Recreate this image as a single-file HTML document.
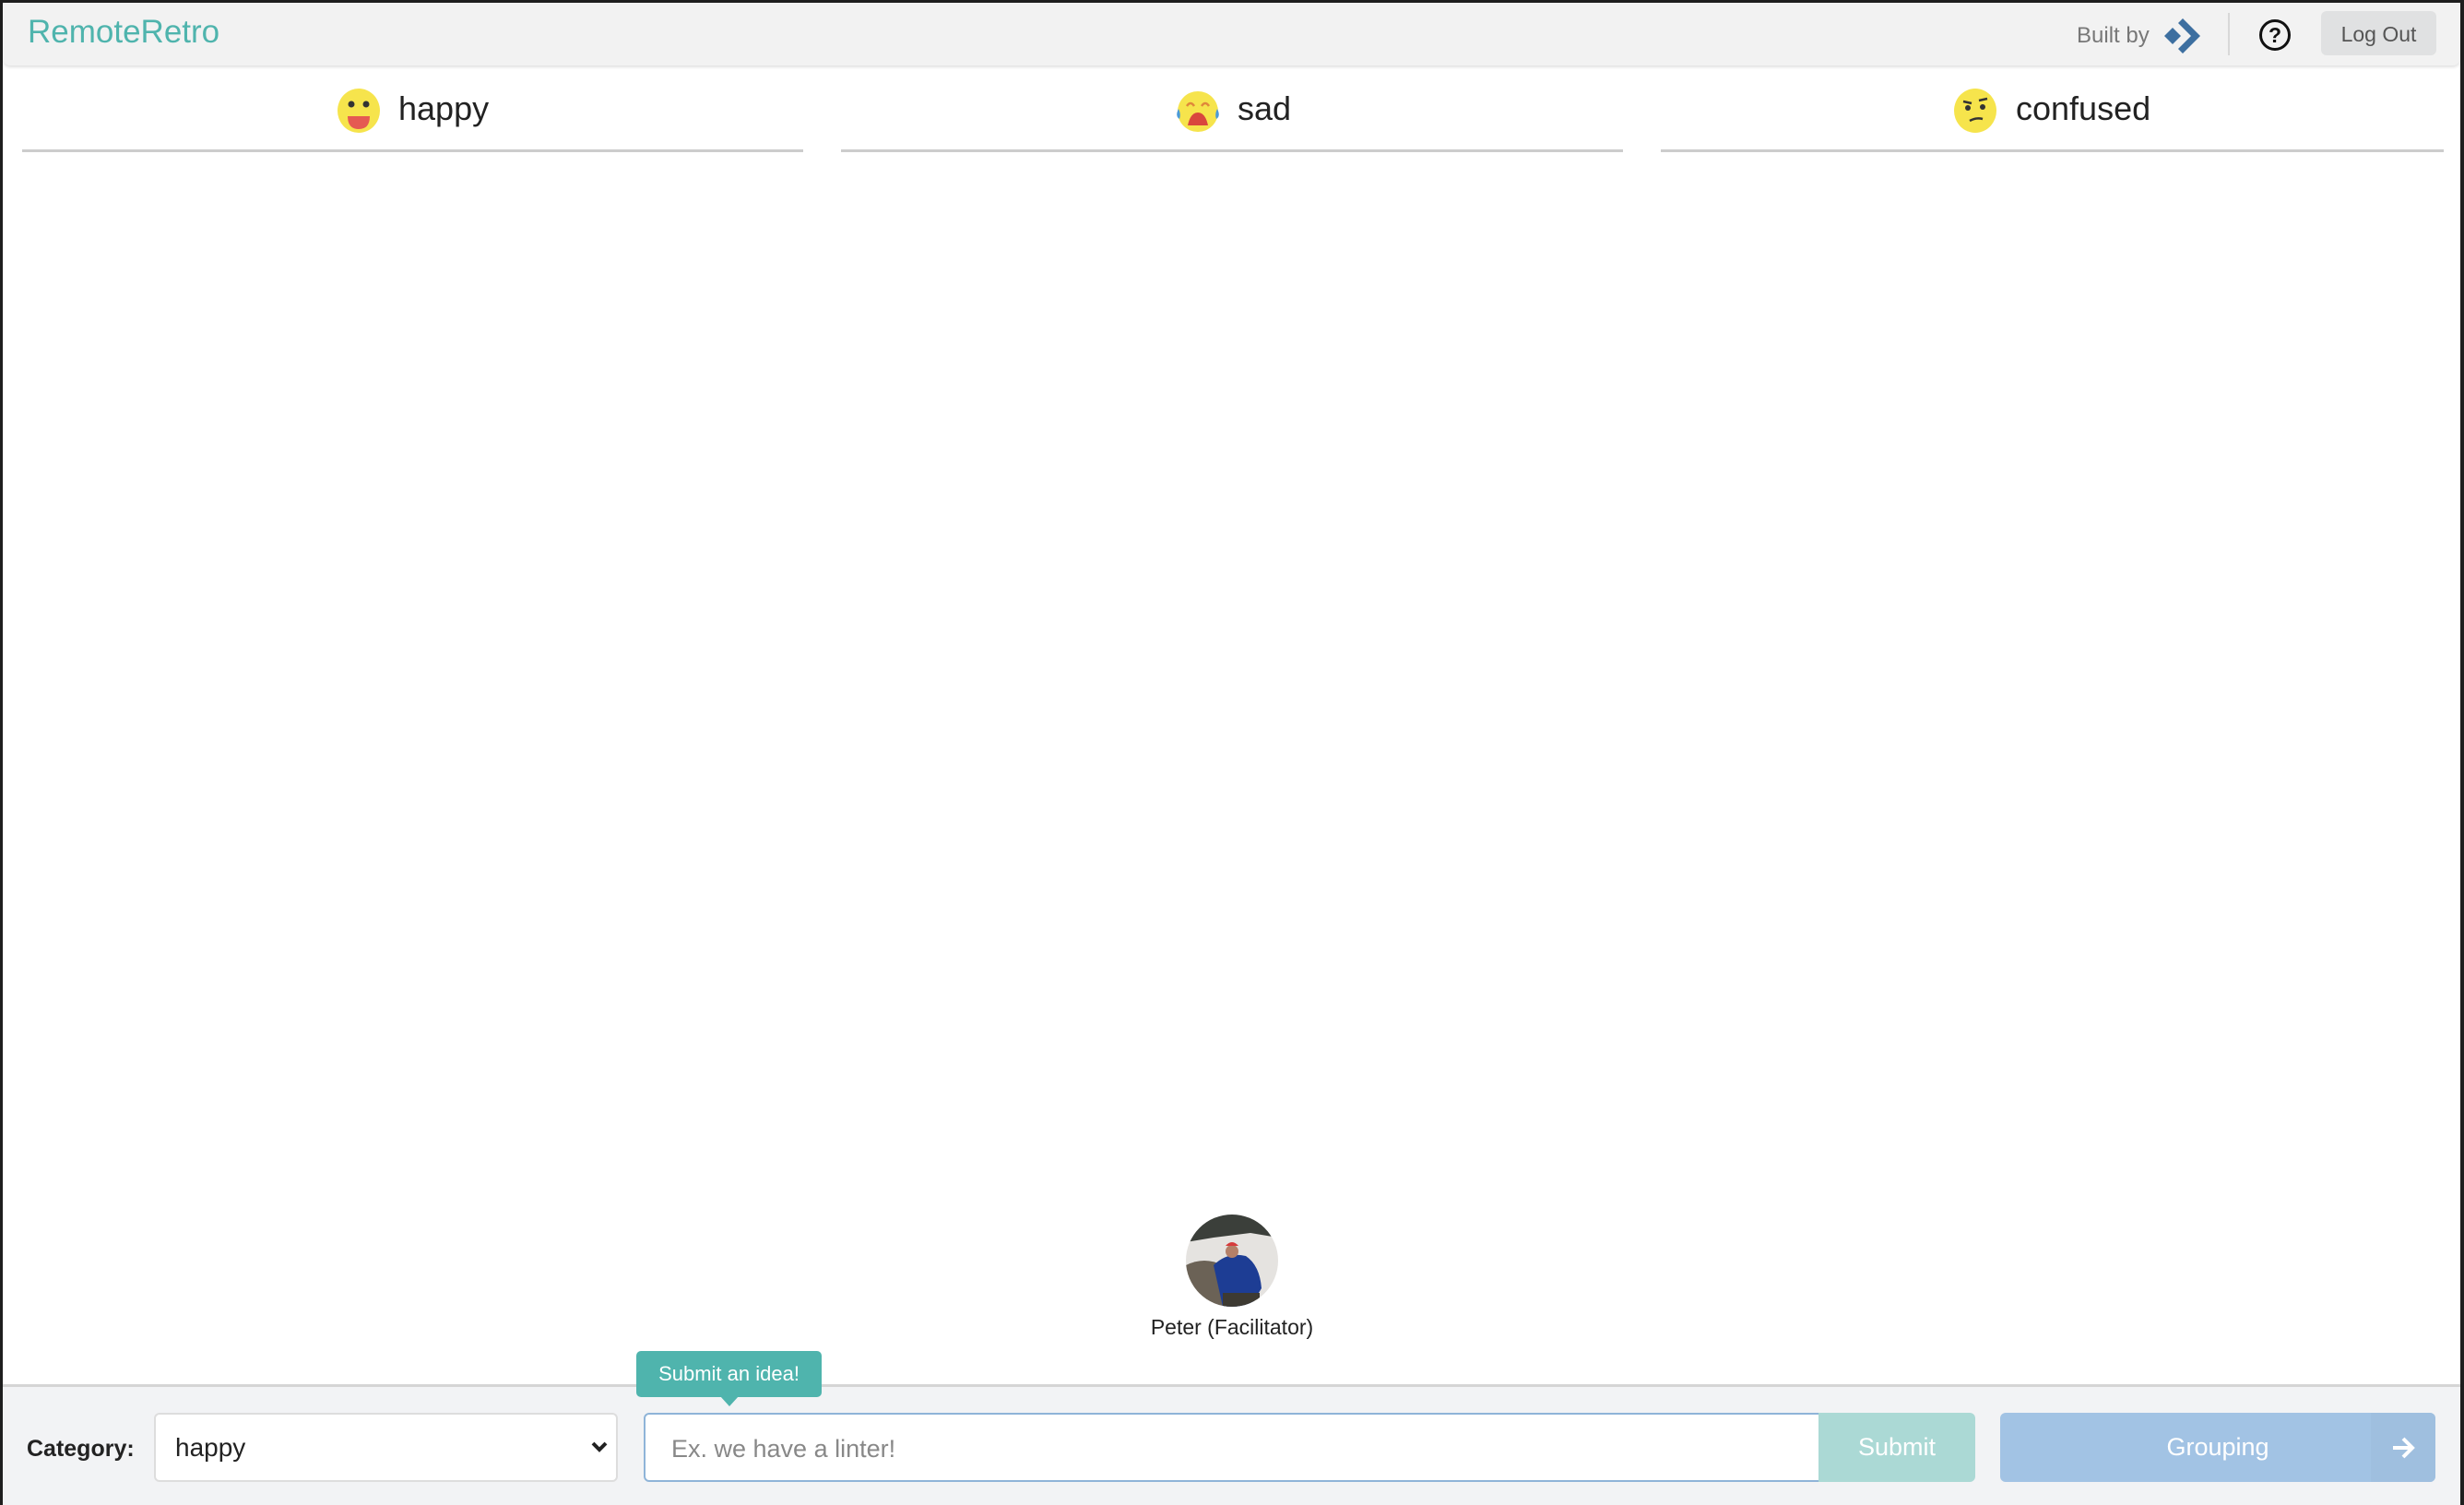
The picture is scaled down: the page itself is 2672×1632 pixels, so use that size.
<!DOCTYPE html>
<html><head><meta charset="utf-8"><style>
*{box-sizing:border-box;margin:0;padding:0}
body{width:2672px;height:1632px;position:relative;background:#fff;font-family:"Liberation Sans",sans-serif;overflow:hidden;color:#222}
.a{position:absolute}
</style></head><body>
<div class="a" style="left:0;top:0;width:2672px;height:3px;background:#1e1e1e"></div>
<div class="a" style="left:0;top:0;width:3px;height:1632px;background:#1e1e1e"></div>
<div class="a" style="right:0;top:0;width:4px;height:1632px;background:#1e1e1e"></div>
<div class="a" style="left:3px;top:3px;width:2665px;height:68px;background:#f2f2f2;border-radius:0 0 8px 8px;box-shadow:0 2px 3px rgba(0,0,0,.12)"></div>
<div class="a" style="left:30px;top:15px;font-size:35px;color:#4fb4ad">RemoteRetro</div>
<div class="a" style="left:2252px;top:25px;font-size:24px;color:#777">Built by</div>
<svg class="a" style="left:2345px;top:17px" width="44" height="44" viewBox="0 0 44 44"><path d="M2 22 L11 13 L20 22 L11 31Z" fill="#3d6fa0"/><path d="M22 3 L41 22 L22 41 L17 36 L31 22 L17 8Z" fill="#3d6fa0"/></svg>
<div class="a" style="left:2416px;top:14px;width:2px;height:46px;background:#d8d8d8"></div>
<div class="a" style="left:2450px;top:21px;width:34px;height:34px;border:3px solid #111;border-radius:50%;font-size:23px;font-weight:bold;text-align:center;line-height:28px;color:#111">?</div>
<div class="a" style="left:2517px;top:12px;width:125px;height:48px;background:#e0e1e2;border-radius:6px;font-size:23px;color:#555;text-align:center;line-height:50px">Log Out</div>

<div class="a" style="left:24px;top:162px;width:847px;height:3px;background:#ccc"></div>
<div class="a" style="left:912px;top:162px;width:848px;height:3px;background:#ccc"></div>
<div class="a" style="left:1801px;top:162px;width:849px;height:3px;background:#ccc"></div>

<svg class="a" style="left:366px;top:96px" width="46" height="48" viewBox="0 0 46 48"><ellipse cx="23" cy="24" rx="23" ry="24" fill="#f6e44c"/><circle cx="15" cy="17" r="3.5" fill="#333"/><circle cx="31" cy="17" r="3.5" fill="#333"/><path d="M11 30 H35 Q35 44 23 44 Q11 44 11 30Z" fill="#e55a52"/></svg>
<div class="a" style="left:432px;top:97px;font-size:36px;color:#222">happy</div>
<svg class="a" style="left:1275px;top:98px" width="48" height="46" viewBox="0 0 48 46"><circle cx="24" cy="23" r="22" fill="#f6e44c"/><path d="M12 17 Q16 11 20 17 M28 17 Q32 11 36 17" stroke="#e0883a" stroke-width="2.5" fill="none"/><path d="M13 38 Q16 24 24 24 Q32 24 35 38Z" fill="#d9473d"/><path d="M3 20 Q6 26 4 31 Q-1 28 3 20Z" fill="#4a9ad8"/><path d="M45 20 Q42 26 44 31 Q49 28 45 20Z" fill="#4a9ad8"/></svg>
<div class="a" style="left:1342px;top:97px;font-size:36px;color:#222">sad</div>
<svg class="a" style="left:2119px;top:96px" width="46" height="48" viewBox="0 0 46 48"><ellipse cx="23" cy="24" rx="23" ry="24" fill="#f6e44c"/><path d="M10 14 L19 16 M27 13 L36 11" stroke="#333" stroke-width="2.5"/><circle cx="15" cy="21" r="3" fill="#333"/><circle cx="31" cy="20" r="3" fill="#333"/><path d="M17 35 Q24 31 31 33" stroke="#333" stroke-width="2.5" fill="none"/></svg>
<div class="a" style="left:2186px;top:97px;font-size:36px;color:#222">confused</div>

<svg class="a" style="left:1286px;top:1317px" width="100" height="100" viewBox="0 0 100 100"><defs><clipPath id="c"><circle cx="50" cy="50" r="50"/></clipPath></defs><g clip-path="url(#c)"><rect width="100" height="100" fill="#e5e3e0"/><path d="M0 0 H100 V25 L70 20 L30 25 L0 30Z" fill="#3b3f3a"/><path d="M0 55 Q20 45 40 55 L45 100 H0Z" fill="#6b6256"/><path d="M30 55 Q45 40 65 45 Q80 55 82 80 L70 100 H40Z" fill="#1d3d94"/><circle cx="50" cy="40" r="7" fill="#b48068"/><path d="M43 34 Q50 26 57 34Z" fill="#d63c3c"/><path d="M40 85 H80 V100 H40Z" fill="#3d3a32"/></g></svg>
<div class="a" style="left:1200px;top:1426px;width:272px;text-align:center;font-size:23px;color:#222">Peter (Facilitator)</div>

<div class="a" style="left:3px;top:1501px;width:2665px;height:131px;background:#f2f3f5;border-top:3px solid #d5d5d5"></div>
<div class="a" style="left:29px;top:1557px;font-size:25px;font-weight:bold;color:#222">Category:</div>
<div class="a" style="left:167px;top:1532px;width:503px;height:75px;background:#fff;border:2px solid #ddd;border-radius:6px"></div>
<div class="a" style="left:190px;top:1554px;font-size:28px;color:#222">happy</div>
<svg class="a" style="left:640px;top:1562px" width="20" height="14" viewBox="0 0 20 14"><path d="M3 3 L10 10 L17 3" stroke="#222" stroke-width="4" fill="none"/></svg>
<div class="a" style="left:698px;top:1532px;width:1276px;height:75px;background:#fff;border:2px solid #8fb4d8;border-radius:6px 0 0 6px"></div>
<div class="a" style="left:728px;top:1556px;font-size:27px;color:#888">Ex. we have a linter!</div>
<div class="a" style="left:1972px;top:1532px;width:170px;height:75px;background:#abd9d5;border-radius:0 6px 6px 0;color:#fff;font-size:27px;text-align:center;line-height:75px">Submit</div>
<div class="a" style="left:2169px;top:1532px;width:472px;height:75px;background:#a2c3e4;border-radius:6px;overflow:hidden"><div style="position:absolute;right:0;top:0;width:70px;height:75px;background:#9fbfdf"></div><div style="position:absolute;left:0;top:0;width:472px;text-align:center;line-height:75px;color:#fff;font-size:27px">Grouping</div><svg style="position:absolute;right:22px;top:25px" width="26" height="26" viewBox="0 0 26 26"><path d="M2 13 H22 M13 3 L23 13 L13 23" stroke="#fff" stroke-width="4" fill="none"/></svg></div>
<div class="a" style="left:690px;top:1465px;width:201px;height:50px;background:#4fb4ad;border-radius:5px;color:#fff;font-size:22px;text-align:center;line-height:50px">Submit an idea!</div>
<div class="a" style="left:781px;top:1514px;width:0;height:0;border-left:10px solid transparent;border-right:10px solid transparent;border-top:11px solid #4fb4ad"></div>
</body></html>
